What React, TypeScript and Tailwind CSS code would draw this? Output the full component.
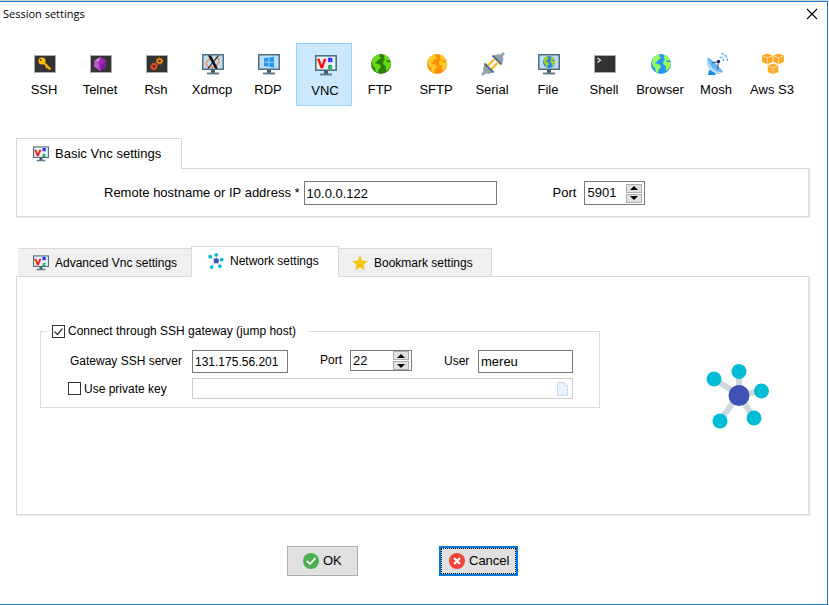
import { useState } from "react";
import type { ReactNode } from "react";

function Terminal({ children }: { children?: ReactNode }) {
  return (
    <>
      <rect x="2.5" y="3.5" width="21" height="17" fill="#333" stroke="#aaa" />
      {children}
    </>
  );
}

function Monitor({ children }: { children?: ReactNode }) {
  return (
    <>
      <path d="M11 17h4v4h-4z" fill="#455a64" />
      <path d="M7 20.5h12v2H7z" fill="#607d8b" />
      <rect x="2" y="2" width="22" height="16" fill="#546e7a" />
      <rect x="3.5" y="3.5" width="19" height="13" fill="#bbdefb" />
      {children}
    </>
  );
}

function Globe({ sea, land }: { sea: string; land: string }) {
  return (
    <>
      <circle cx="13" cy="12" r="10" fill={sea} />
      <path
        fill={land}
        d="M4.2 8.2C5.3 5.6 7.2 3.7 10 2.6l1.6.5-.4 1.5 1.6.6-.5 1.6-2.3.9-.7 1.900-2.100.6.4 1.400 2.600.4 2.600 1.700-.4 2.400-1.800 1.400-.5 2.700-1 1.100-1.600-2.400-.3-3-2.200-1.900-.8-2.600zM15.400 2.600c3 .8 5.300 2.700 6.600 5.200l-1.300 1-1.700-.5-1 1.200 2.100.8 2.600-.6.2 2.800-1.500 3.200-1.500 2.400-1.800.5-.5-2.600.4-2.100-2.200-1-.9-2.100 1-2.200 1.200-.9-1.400-1.400.7-1.700z"
      />
    </>
  );
}

function VncLogo() {
  return (
    <Monitor>
      <rect x="4" y="4" width="18" height="12" fill="#eaf2fa" />
      <text x="4.500" y="15" fill="#f00" stroke="#f00" strokeWidth="0.600" fontSize="13" fontWeight="bold" fontFamily="Liberation Sans, sans-serif">V</text>
      <text x="15" y="9" fill="#11f" stroke="#11f" strokeWidth="0.700" fontSize="7" fontWeight="bold" fontFamily="Liberation Sans, sans-serif">n</text>
      <text x="15" y="16" fill="#0a3" stroke="#0a3" strokeWidth="0.700" fontSize="7" fontWeight="bold" fontFamily="Liberation Sans, sans-serif">c</text>
    </Monitor>
  );
}

function Gear({ x, y, r, color }: { x: number; y: number; r: number; color: string }) {
  return (
    <g fill="none" stroke={color}>
      <circle cx={x} cy={y} r={r} strokeWidth="1.5" />
      <circle cx={x} cy={y} r={r + 1.1} strokeWidth="1.1" strokeDasharray="1.4 1.2" />
    </g>
  );
}

function Cube({ x, y }: { x: number; y: number }) {
  return (
    <g transform={`translate(${x} ${y})`}>
      <path d="M5.300 0l5.300 2v6.500l-5.300 2.200L0 8.500V2z" fill="#ffa726" />
      <path d="M0.500 2.300l4.800 2 4.800-2M5.300 4.300v6" fill="none" stroke="#ffe8c4" strokeWidth="0.800" />
    </g>
  );
}

function Network() {
  return (
    <>
      <g stroke="#cfd8dc" strokeWidth="6">
        <path d="M33 31V8M33 31L8 15M33 31l22-4M33 31l15 23M33 31L14 56" />
      </g>
      <g fill="#00bcd4">
        <circle cx="33" cy="7.500" r="7.500" />
        <circle cx="8" cy="15" r="7.500" />
        <circle cx="55.500" cy="27" r="7.500" />
        <circle cx="48" cy="54" r="7.500" />
        <circle cx="14" cy="57" r="7.500" />
      </g>
      <circle cx="33" cy="31.500" r="10.500" fill="#3f51b5" />
    </>
  );
}

const sessions: { name: string; art: ReactNode }[] = [
  {
    name: "SSH",
    art: (
      <Terminal>
        <path d="M10.500 9.500l8 8M15.500 14.500l-1.500 1.500" stroke="#ffb300" strokeWidth="2.200" />
        <circle cx="10" cy="9" r="3.500" fill="#ffc107" />
        <circle cx="8.800" cy="8" r="0.900" fill="#333" />
      </Terminal>
    ),
  },
  {
    name: "Telnet",
    art: (
      <Terminal>
        <path d="M12.500 5l6 3.500-1 7-5.500 3.500-6-4.500.5-6z" fill="#9c27b0" />
        <path d="M12.500 5L6.500 8.500l4 1.500z" fill="#ce93d8" />
        <path d="M6.500 8.500l4 1.500 1.500 9-6-4.500z" fill="#ba55cc" />
        <path d="M18.500 8.500l-1 7L12 19l2-7z" fill="#7b1fa2" />
      </Terminal>
    ),
  },
  {
    name: "Rsh",
    art: (
      <Terminal>
        <Gear x={10} y={14.5} r={2.2} color="#f4511e" />
        <Gear x={15.5} y={9} r={2} color="#fb8c00" />
      </Terminal>
    ),
  },
  {
    name: "Xdmcp",
    art: (
      <Monitor>
        <path d="M12 6.500C8 7.500 5.500 10 6.500 13s4.500 2.500 7 1.500M15 6c3-.5 4.500 1 4 3.500s-2.500 4-4 5" fill="none" stroke="#ff8a50" strokeWidth="1.500" />
        <path d="M8 3.500h3l7 13h-3z" fill="#111" />
        <path d="M18.500 3.500L8 16.500" stroke="#111" strokeWidth="1.100" />
      </Monitor>
    ),
  },
  {
    name: "RDP",
    art: (
      <Monitor>
        <path d="M8 6.200l4.500-.7v4.200H8zM13.300 5.400L18 4.700v5h-4.700zM8 10.500h4.500v4.200L8 14zM13.300 10.500H18v5l-4.700-.7z" fill="#2196f3" />
      </Monitor>
    ),
  },
  { name: "VNC", art: <VncLogo /> },
  { name: "FTP", art: <Globe sea="#2e7d0e" land="#64dd17" /> },
  { name: "SFTP", art: <Globe sea="#ff8f00" land="#ffc928" /> },
  {
    name: "Serial",
    art: (
      <>
        <path d="M2 23l4-4M20 5l4-4" stroke="#90a4ae" strokeWidth="2.500" />
        <path d="M8 13.500l6-6M11.500 17l6-6" stroke="#ffb300" strokeWidth="2" />
        <path d="M5 12l8 8c-2 1.800-6 2.500-9 1-1.500-3-.8-7 1-9z" fill="#90a4ae" />
        <path d="M13.500 4l8 8c1.800-2 2.500-6 1-9-3-1.500-7-.8-9 1z" fill="#90a4ae" />
        <path d="M4.500 11.500l9 9M12.500 3.500l9 9" stroke="#546e7a" strokeWidth="2" />
      </>
    ),
  },
  {
    name: "File",
    art: (
      <Monitor>
        <g transform="translate(5.200 2.800) scale(0.600)">
          <Globe sea="#1e88e5" land="#b4cc20" />
        </g>
      </Monitor>
    ),
  },
  {
    name: "Shell",
    art: (
      <Terminal>
        <path d="M5.500 6l3 2.200-3 2.200" fill="none" stroke="#eee" strokeWidth="1.200" />
      </Terminal>
    ),
  },
  { name: "Browser", art: <Globe sea="#2196f3" land="#9cff57" /> },
  {
    name: "Mosh",
    art: (
      <>
        <path d="M5 18l5 1 2 4H4z" fill="#1e88e5" />
        <path d="M4 5.500C2 10 3 15 7 18.500s8 4 12 1.500z" fill="#64b5f6" />
        <path d="M4 5.500C8 8 16 15 19 20c-3 .5-7-1-10.500-4.500S3.500 8 4 5.500z" fill="#64b5f6" />
        <path d="M4 5.500C2 10 3 15 7 18.500s8 4 12 1.500c-4 .5-8-1-11-4.500S3.500 8 4 5.500z" fill="#bbdefb" />
        <path d="M8 11l6.500-1.500L13.500 17" fill="none" stroke="#455a64" strokeWidth="1.100" />
        <circle cx="14.500" cy="9.500" r="1.700" fill="#1a237e" />
        <path d="M15.500 5c2.500 0 4 1.700 4 4M17 1.500c4 .5 6.500 3.500 6.500 7.500" fill="none" stroke="#42a5f5" strokeWidth="1.200" strokeDasharray="3 1" />
      </>
    ),
  },
  {
    name: "Aws S3",
    art: (
      <>
        <Cube x={2} y={1.6} />
        <Cube x={13.4} y={1.6} />
        <Cube x={7.7} y={11.6} />
      </>
    ),
  },
];

const panelBody = "border border-[#d9d9d9] bg-white shadow-[1px_1px_0_#f0f0f0,2px_1px_0_#f0f0f0]";
const field = "border border-[#7a7a7a] bg-white px-[2px] outline-none";

function SmallVnc() {
  return (
    <svg viewBox="2 2 22 21" className="size-4 shrink-0" aria-hidden="true">
      <VncLogo />
    </svg>
  );
}

function PortField({ id, initial, className }: { id: string; initial: number; className: string }) {
  const [port, setPort] = useState(initial);
  const step = "flex h-[9px] w-4 items-center justify-center border border-[#adadad] bg-[#e1e1e1]";
  return (
    <div className={`flex items-center justify-between border border-[#7a7a7a] pr-[2px] ${className}`}>
      <input
        id={id}
        inputMode="numeric"
        value={port}
        onChange={(e) => setPort(Number(e.target.value) || 0)}
        className="w-9 bg-transparent pl-[2px] text-[13px] outline-none"
      />
      <span className="flex flex-col gap-px">
        <button type="button" aria-label="Increase port" className={step} onClick={() => setPort(port + 1)}>
          <svg viewBox="0 0 8 4" className="h-1 w-2"><path d="M4 0l4 4H0z" /></svg>
        </button>
        <button type="button" aria-label="Decrease port" className={step} onClick={() => setPort(port - 1)}>
          <svg viewBox="0 0 8 4" className="h-1 w-2"><path d="M0 0h8L4 4z" /></svg>
        </button>
      </span>
    </div>
  );
}

function Check({ id, initial }: { id: string; initial: boolean }) {
  const [on, setOn] = useState(initial);
  return (
    <span className="grid size-[13px] shrink-0">
      <input
        id={id}
        type="checkbox"
        checked={on}
        onChange={() => setOn(!on)}
        className="col-start-1 row-start-1 size-[13px] appearance-none border border-[#333] bg-white"
      />
      {on && (
        <svg viewBox="0 0 13 13" className="pointer-events-none col-start-1 row-start-1 size-[13px]" aria-hidden="true">
          <path d="M2.500 6.500l3 3 5-6" fill="none" stroke="#333" strokeWidth="1.200" />
        </svg>
      )}
    </span>
  );
}

export default function App() {
  const [selected, setSelected] = useState("VNC");
  return (
    <div className="flex min-h-screen flex-col border-t border-[#d4d4d4] bg-white pr-px font-['Liberation_Sans',Arial,sans-serif] text-[13px] leading-4 text-black">
      <div className="flex grow flex-col border-t border-r border-b border-[#1979ca]">
        <header className="flex h-6 items-center justify-between pr-[9px] pl-[3px]">
          <h1 className="font-['Open_Sans','Noto_Sans',sans-serif] text-[11px]">Session settings</h1>
          <button type="button" aria-label="Close">
            <svg viewBox="0 0 12 12" className="size-3" fill="none" stroke="#000" strokeWidth="1.100">
              <path d="M1 1l10 10M11 1L1 11" />
            </svg>
          </button>
        </header>

        <main className="flex flex-col pr-[18px] pl-4">
          <nav className="mt-[17px] flex" aria-label="Session type">
            {sessions.map(({ name, art }) => (
              <button
                key={name}
                type="button"
                onClick={() => setSelected(name)}
                className={`flex h-[63px] w-14 flex-col items-center gap-[6px] border whitespace-nowrap ${
                  name === selected ? "border-[#99d1ff] bg-[#cce8ff] pt-[9px] pl-[2px]" : "border-transparent pt-2"
                }`}
              >
                <svg viewBox="0 0 24 24" className="size-6 shrink-0 overflow-visible" aria-hidden="true">{art}</svg>
                {name}
              </button>
            ))}
          </nav>

          <section className="mt-8">
            <h2 className="relative -mb-px flex h-[31px] w-[166px] items-center gap-[6px] border border-b-0 border-[#d9d9d9] bg-white pl-4">
              <SmallVnc />
              Basic Vnc settings
            </h2>
            <div className={`flex items-center pt-3 pb-[11px] pl-[87px] ${panelBody}`}>
              <label htmlFor="host" className="mr-1">Remote hostname or IP address *</label>
              <input id="host" defaultValue="10.0.0.122" className={`h-6 w-[193px] text-[13px] ${field}`} />
              <label htmlFor="port" className="mr-2 ml-14">Port</label>
              <PortField id="port" initial={5901} className="h-6 w-[61px]" />
            </div>
          </section>

          <section className="mt-[29px]">
            <div role="tablist" className="-mb-px flex items-end pl-[2px] text-[12px]">
              <button type="button" role="tab" aria-selected="false" className="mb-px flex h-7 w-[173px] items-center gap-[6px] border-t border-[#d9d9d9] bg-[#f0f0f0] pl-[15px]">
                <SmallVnc />
                Advanced Vnc settings
              </button>
              <button type="button" role="tab" aria-selected="true" className="relative flex h-[31px] w-[148px] items-center gap-[6px] border border-b-0 border-[#d9d9d9] bg-white pb-[2px] pl-4">
                <svg viewBox="0 0 64 65" className="size-4 shrink-0" aria-hidden="true"><Network /></svg>
                Network settings
              </button>
              <button type="button" role="tab" aria-selected="false" className="mb-px flex h-7 w-[153px] items-center gap-[6px] border-t border-r border-[#d9d9d9] bg-[#f0f0f0] pl-[13px]">
                <svg viewBox="0 0 16 16" className="size-4 shrink-0" aria-hidden="true">
                  <path d="M8 .5l2.200 5.100 5.500.5-4.200 3.600 1.300 5.500L8 12.300l-4.800 2.900 1.300-5.500L.3 6.100l5.500-.5z" fill="#f2c40f" />
                </svg>
                Bookmark settings
              </button>
            </div>

            <div className={`flex items-start justify-between pt-[46px] pr-[38px] pb-[85px] pl-[23px] ${panelBody}`}>
              <fieldset className="min-w-0 border border-[#dcdcdc] pb-2 text-[12px]">
                <legend className="ml-[6px] flex items-center gap-[3px] pr-3 pl-[5px]">
                  <Check id="gateway" initial={true} />
                  <label htmlFor="gateway">Connect through SSH gateway (jump host)</label>
                </legend>
                <div className="flex flex-col gap-[5px] pt-[11px] pr-[26px]">
                  <div className="flex items-start">
                    <label htmlFor="server" className="w-[151px] pt-[3px] pr-[10px] text-right">Gateway SSH server</label>
                    <input id="server" defaultValue="131.175.56.201" className={`h-[23px] w-24 ${field}`} />
                    <label htmlFor="gport" className="ml-8 w-[30px] pt-[2px]">Port</label>
                    <PortField id="gport" initial={22} className="h-[21px] w-[62px]" />
                    <label htmlFor="user" className="ml-8 w-[34px] pt-[3px]">User</label>
                    <input id="user" defaultValue="mereu" className={`h-[23px] w-[95px] text-[13px] ${field}`} />
                  </div>
                  <div className="flex items-center">
                    <div className="flex w-[151px] items-center gap-[3px] pl-[27px]">
                      <Check id="key" initial={false} />
                      <label htmlFor="key">Use private key</label>
                    </div>
                    <div className="flex h-[21px] grow items-center border border-[#ccc] pr-1">
                      <input aria-label="Private key file" disabled className="min-w-0 grow bg-white" />
                      <button type="button" aria-label="Browse for key file">
                        <svg viewBox="0 0 11 14" className="h-[14px] w-[11px]">
                          <path d="M.5.500h7l3 3v10H.5z" fill="#e8f3ff" stroke="#c5dcf2" />
                          <path d="M7.500.500v3h3" fill="#fff" stroke="#c5dcf2" />
                        </svg>
                      </button>
                    </div>
                  </div>
                </div>
              </fieldset>
              <svg viewBox="0 0 64 65" className="mt-[41px] h-[65px] w-16 shrink-0" aria-hidden="true"><Network /></svg>
            </div>
          </section>

          <footer className="mt-[31px] flex justify-center gap-[81px] pr-5">
            <button type="button" className="flex h-[30px] w-[71px] items-center gap-1 border border-[#adadad] bg-[#e1e1e1] pl-[15px]">
              <svg viewBox="0 0 16 16" className="size-4" aria-hidden="true">
                <circle cx="8" cy="8" r="8" fill="#4caf50" />
                <path d="M4 8l3 3 5.500-6" fill="none" stroke="#fff" strokeWidth="1.800" />
              </svg>
              OK
            </button>
            <button type="button" className="h-[30px] w-[79px] border-2 border-[#0078d7] bg-[#e1e1e1]">
              <span className="flex h-full items-center gap-1 border border-dotted border-black pl-[7px]">
                <svg viewBox="0 0 16 16" className="size-4" aria-hidden="true">
                  <circle cx="8" cy="8" r="8" fill="#f44336" />
                  <path d="M5 5l6 6M11 5l-6 6" stroke="#fff" strokeWidth="2" />
                </svg>
                Cancel
              </span>
            </button>
          </footer>
        </main>
      </div>
    </div>
  );
}
